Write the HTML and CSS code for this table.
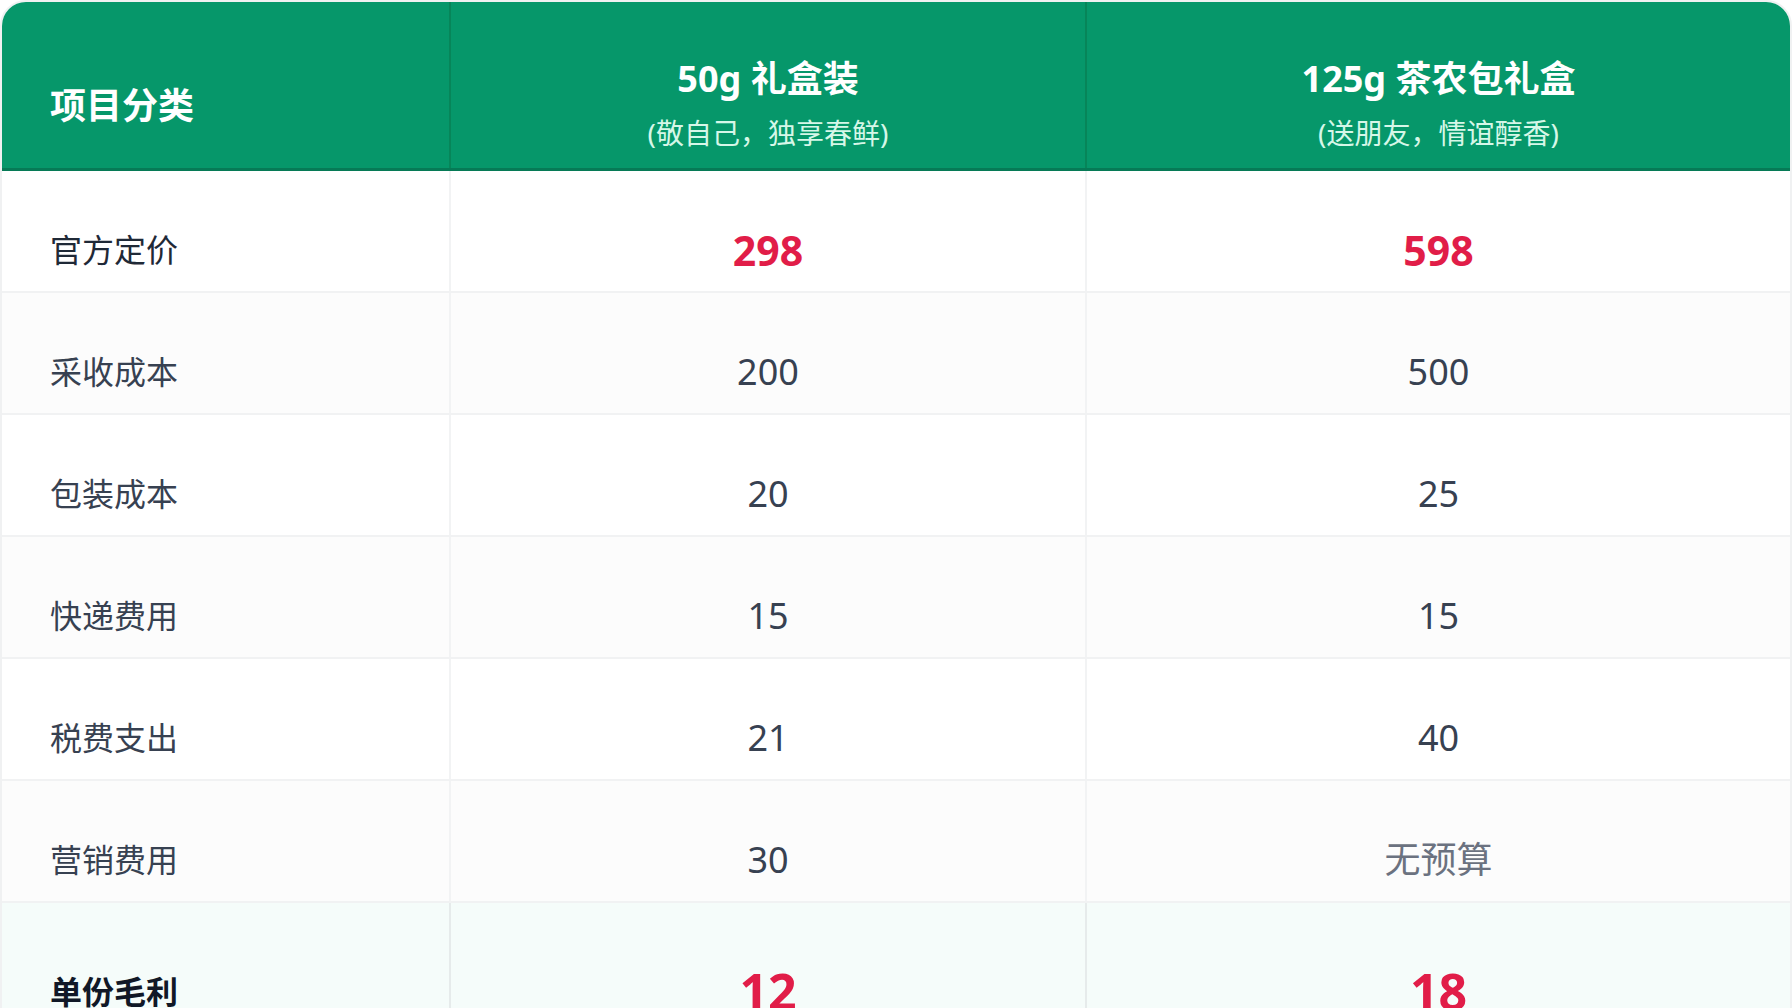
FILE: index.html
```html
<!DOCTYPE html>
<html lang="zh-CN">
<head>
<meta charset="utf-8">
<title>礼盒成本对比</title>
<link rel="stylesheet" href="styles.css">
</head>
<body>
<div class="table">
  <div class="row head">
    <div class="cell label-cell head-label-cell"><span class="head-label">项目分类</span></div>
    <div class="cell val-cell">
      <div class="head-title">50g 礼盒装</div>
      <div class="head-sub">(敬自己，独享春鲜)</div>
    </div>
    <div class="cell val-cell">
      <div class="head-title">125g 茶农包礼盒</div>
      <div class="head-sub">(送朋友，情谊醇香)</div>
    </div>
  </div>

  <div class="row">
    <div class="cell label-cell"><span class="label strong-label">官方定价</span></div>
    <div class="cell val-cell"><span class="price">298</span></div>
    <div class="cell val-cell"><span class="price">598</span></div>
  </div>

  <div class="row alt">
    <div class="cell label-cell"><span class="label">采收成本</span></div>
    <div class="cell val-cell"><span class="value">200</span></div>
    <div class="cell val-cell"><span class="value">500</span></div>
  </div>

  <div class="row">
    <div class="cell label-cell"><span class="label">包装成本</span></div>
    <div class="cell val-cell"><span class="value">20</span></div>
    <div class="cell val-cell"><span class="value">25</span></div>
  </div>

  <div class="row alt">
    <div class="cell label-cell"><span class="label">快递费用</span></div>
    <div class="cell val-cell"><span class="value">15</span></div>
    <div class="cell val-cell"><span class="value">15</span></div>
  </div>

  <div class="row">
    <div class="cell label-cell"><span class="label">税费支出</span></div>
    <div class="cell val-cell"><span class="value">21</span></div>
    <div class="cell val-cell"><span class="value">40</span></div>
  </div>

  <div class="row alt">
    <div class="cell label-cell"><span class="label">营销费用</span></div>
    <div class="cell val-cell"><span class="value">30</span></div>
    <div class="cell val-cell"><span class="value muted">无预算</span></div>
  </div>

  <div class="row total">
    <div class="cell label-cell"><span class="label total-label">单份毛利</span></div>
    <div class="cell val-cell"><span class="total-value">12</span></div>
    <div class="cell val-cell"><span class="total-value">18</span></div>
  </div>
</div>
</body>
</html>
```

FILE: styles.css
```css
html, body {
  margin: 0;
  padding: 0;
  background: #ffffff;
}

body {
  font-family: "Noto Sans", "Noto Sans CJK SC", sans-serif;
  color: #374151;
}

.table {
  width: 1788px;
  border: 2px solid #f0f1f2;
  border-radius: 26px;
  overflow: hidden;
  background: #ffffff;
}

.row {
  display: grid;
  grid-template-columns: 447px 636px 705px;
  height: 122px;
  border-bottom: 2px solid #f1f2f3;
  box-sizing: border-box;
}

.row.alt {
  background: #fcfcfc;
}

.row.head {
  height: 169px;
  background: #06976a;
  border-bottom: 3px solid #067a56;
}

.row.total {
  height: 200px;
  background: #f5fcfa;
  border-bottom: none;
}

.cell {
  display: flex;
  flex-direction: column;
  justify-content: center;
  padding-top: 38px;
  box-sizing: border-box;
}

.cell + .cell {
  border-left: 2px solid #f2f3f4;
}

.head .cell + .cell {
  border-left: 2px solid #078559;
}

.total .cell + .cell {
  border-left: 2px solid #e6ebeb;
}

.total .cell {
  justify-content: flex-start;
  padding-top: 56px;
}

.label-cell {
  padding-left: 48px;
  align-items: flex-start;
}

.val-cell {
  align-items: center;
  text-align: center;
}

.head .cell {
  justify-content: flex-start;
  padding-top: 54px;
}

.head .head-label-cell {
  padding-top: 81px;
}

.head-label {
  font-size: 36px;
  font-weight: 700;
  color: #ffffff;
  line-height: 1.3;
}

.head-title {
  font-size: 36px;
  font-weight: 700;
  color: #ffffff;
  line-height: 1.3;
}

.head-sub {
  font-size: 28px;
  color: #d6f7e8;
  line-height: 1.3;
  margin-top: 12px;
}

.label {
  font-size: 32px;
  line-height: 1.3;
  color: #374151;
}

.strong-label {
  color: #1f2937;
}

.total-label {
  font-weight: 700;
  color: #111827;
  margin-top: 12px;
}

.value {
  font-size: 36px;
  line-height: 1.3;
  color: #374151;
}

.value.muted {
  color: #6b7280;
}

.price {
  font-size: 41px;
  font-weight: 700;
  line-height: 1.3;
  color: #e11d48;
  margin-top: 2px;
}

.total-value {
  font-size: 50px;
  font-weight: 700;
  line-height: 1.3;
  color: #e11d48;
}
```
